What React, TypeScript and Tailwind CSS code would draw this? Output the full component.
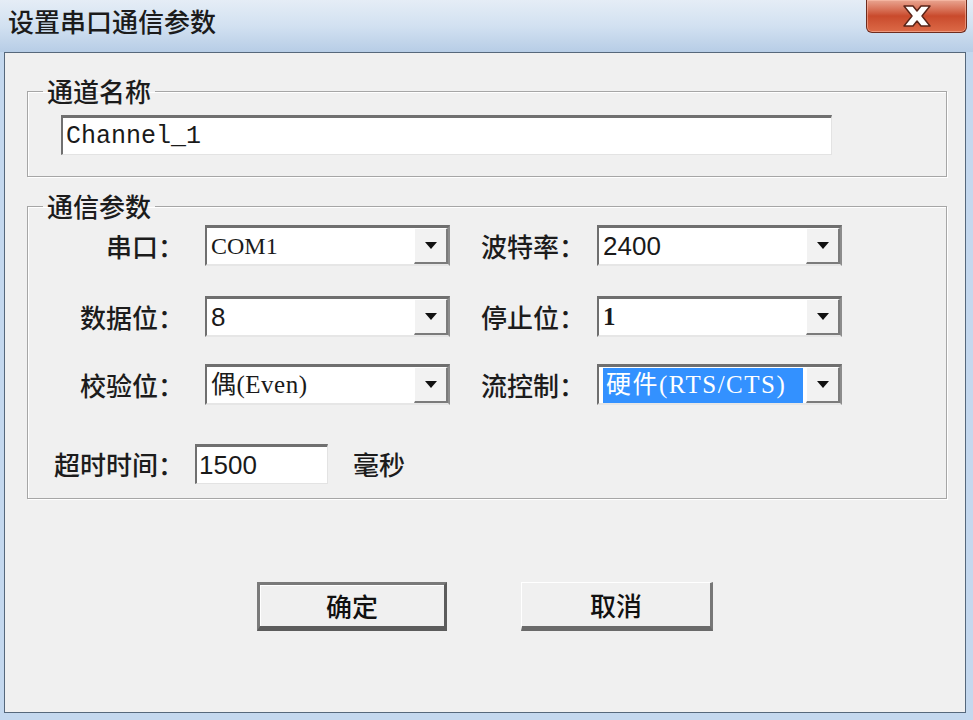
import React from 'react';

const cjk = "font-['Noto_Sans_CJK_SC',sans-serif] font-medium";
const serif = "font-['Liberation_Serif','Noto_Sans_CJK_SC',serif]";
const sans = "font-['Liberation_Sans','Noto_Sans_CJK_SC',sans-serif]";
const mono = "font-['Liberation_Mono','Noto_Sans_CJK_SC',monospace]";

type ComboProps = {
    children: React.ReactNode;
    font: string;
};

const Arrow = () => (
    <svg width="12" height="7" viewBox="0 0 12 7">
        <path d="M0 0 L12 0 L6 7 Z" fill="#111" />
    </svg>
);

const Combo = ({ children, font }: ComboProps) => (
    <div className="flex h-[41px] w-[245px] border-t-[3px] border-l-[2px] border-r-[2px] border-b-[2px] border-t-[#6f6f6f] border-l-[#6f6f6f] border-r-[#8c8c8c] border-b-[#e6e6e6] bg-white">
        <div className={`flex flex-1 items-center pl-[4px] text-[#1a1a1a] ${font}`}>{children}</div>
        <div className="flex w-[34px] items-center justify-center border-t border-l border-r-2 border-b-2 border-t-white border-l-white border-r-[#7b7b7b] border-b-[#7b7b7b] bg-[#f2f2f2]">
            <Arrow />
        </div>
    </div>
);

const Label = ({ text, className }: { text: string; className: string }) => (
    <div className={`text-right text-[26px] leading-[30px] text-[#1c1c1c] ${cjk} ${className}`}>{text}</div>
);

const Button = ({ text, isDefault }: { text: string; isDefault?: boolean }) => (
    <button
        className={`flex h-[49px] items-center justify-center bg-[#f0f0f0] text-[26px] leading-none text-[#111] ${cjk} ${
            isDefault
                ? 'w-[190px] border-t-[3px] border-l-[3px] border-r-[3px] border-b-[5px] border-t-[#7a7a7a] border-l-[#7a7a7a] border-r-[#5c5c5c] border-b-[#5c5c5c] shadow-[inset_1px_1px_0_#fff]'
                : 'w-[192px] border-t border-l border-r-[3px] border-b-[5px] border-t-white border-l-white border-r-[#777] border-b-[#6a6a6a]'
        }`}
    >
        {text}
    </button>
);

export default function App() {
    return (
        <div className="h-[720px] w-[973px] overflow-hidden bg-[#c4d8ee]">
            {/* title bar */}
            <div className="flex h-[52px] items-start justify-between bg-gradient-to-b from-[#e5edf6] via-[#d2e1f1] to-[#b7cde6]">
                <div className={`pl-[8px] pt-[4px] text-[26px] leading-[34px] text-[#1b1b1b] ${cjk}`}>设置串口通信参数</div>
                <div className="mr-[6px] flex h-[33px] w-[101px] items-center justify-center rounded-b-[6px] border border-t-0 border-[#6e2b1d] bg-gradient-to-b from-[#e9a591] via-[#c94a2c] to-[#dc6a47] shadow-[inset_0_0_0_1px_rgba(255,200,180,0.5)]">
                    <svg width="32" height="24" viewBox="0 0 32 24">
                        <path
                            d="M3 2 H12 L16 7 L20 2 H29 L21 12 L29 22 H20 L16 17 L12 22 H3 L11 12 Z"
                            fill="#fff"
                            stroke="#5a2418"
                            strokeWidth="1.5"
                            strokeLinejoin="round"
                        />
                    </svg>
                </div>
            </div>

            {/* client area */}
            <div className="ml-[4px] flex h-[661px] w-[962px] flex-col border border-[#56687b] bg-[#f0f0f0]">
                <fieldset className="mt-[23px] ml-[22px] w-[920px] border border-[#a6a6a6] px-0 pb-[21px] shadow-[inset_1px_1px_0_#fff,1px_1px_0_#fff]">
                    <legend className={`ml-[15px] px-[4px] text-[26px] leading-[30px] text-[#1c1c1c] ${cjk}`}>通道名称</legend>
                    <div className="mt-[9px] ml-[33px] flex h-[40px] w-[771px] items-center border-t-[3px] border-l-[2px] border-r border-b border-t-[#707070] border-l-[#707070] border-r-[#e3e3e3] border-b-[#e3e3e3] bg-white pl-[3px]">
                        <span className={`text-[25px] leading-none text-[#1a1a1a] ${mono}`}>Channel_1</span>
                    </div>
                </fieldset>

                <fieldset className="mt-[14px] ml-[22px] w-[920px] border border-[#a6a6a6] px-0 pb-[14px] shadow-[inset_1px_1px_0_#fff,1px_1px_0_#fff]">
                    <legend className={`ml-[15px] px-[4px] text-[26px] leading-[30px] text-[#1c1c1c] ${cjk}`}>通信参数</legend>
                    <div className="flex flex-col">
                        <div className="mt-[4px] flex items-center">
                            <Label text="串口：" className="w-[156px]" />
                            <div className="ml-[21px]">
                                <Combo font={serif}>
                                    <span className="text-[24px]">COM1</span>
                                </Combo>
                            </div>
                            <Label text="波特率：" className="w-[135px]" />
                            <div className="ml-[12px]">
                                <Combo font={sans}>
                                    <span className="text-[26px]">2400</span>
                                </Combo>
                            </div>
                        </div>
                        <div className="mt-[30px] flex items-center">
                            <Label text="数据位：" className="w-[156px]" />
                            <div className="ml-[21px]">
                                <Combo font={sans}>
                                    <span className="text-[26px]">8</span>
                                </Combo>
                            </div>
                            <Label text="停止位：" className="w-[135px]" />
                            <div className="ml-[12px]">
                                <Combo font={serif}>
                                    <span className="text-[25px] font-bold">1</span>
                                </Combo>
                            </div>
                        </div>
                        <div className="mt-[27px] flex items-center">
                            <Label text="校验位：" className="w-[156px]" />
                            <div className="ml-[21px]">
                                <Combo font={serif}>
                                    <span className="text-[25px] tracking-[0.5px]">偶(Even)</span>
                                </Combo>
                            </div>
                            <Label text="流控制：" className="w-[135px]" />
                            <div className="ml-[12px]">
                                <Combo font={serif}>
                                    <span className="flex h-[35px] w-[200px] items-center bg-[#3391ff] pl-[3px] text-[25px] tracking-[1.5px] text-white">硬件(RTS/CTS)</span>
                                </Combo>
                            </div>
                        </div>
                        <div className="mt-[39px] flex items-center">
                            <Label text="超时时间：" className="w-[156px]" />
                            <div className="ml-[11px] flex h-[40px] w-[133px] items-center border-t-[3px] border-l-[2px] border-r border-b border-t-[#707070] border-l-[#707070] border-r-[#e3e3e3] border-b-[#e3e3e3] bg-white pl-[2px]">
                                <span className={`text-[26px] leading-none text-[#1a1a1a] ${sans}`}>1500</span>
                            </div>
                            <div className={`ml-[25px] text-[26px] leading-[30px] text-[#1c1c1c] ${cjk}`}>毫秒</div>
                        </div>
                    </div>
                </fieldset>

                <div className="mt-[83px] flex justify-center gap-[74px]">
                    <Button text="确定" isDefault />
                    <Button text="取消" />
                </div>
            </div>
        </div>
    );
}
